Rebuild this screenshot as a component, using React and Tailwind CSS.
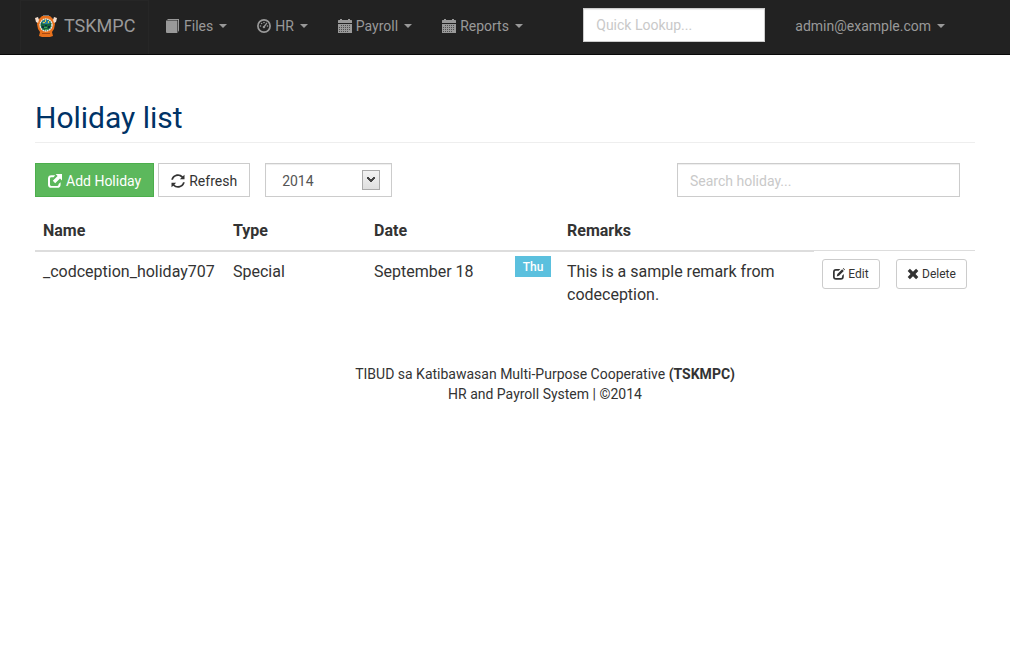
import React from "react";

const iconClass = "inline-block h-[14px] w-[14px] shrink-0";

function BookIcon() {
  return (
    <svg className={iconClass} viewBox="0 0 14 14" fill="currentColor" aria-hidden="true">
      <path d="M2 0H13v11.500L12 13V1H1z" />
      <path d="M0 1.600h11.400V14H1a1 1 0 0 1-1-1z" />
    </svg>
  );
}

function DashboardIcon() {
  return (
    <svg className={iconClass} viewBox="0 0 14 14" fill="currentColor" aria-hidden="true">
      <circle cx="7" cy="7" r="6.100" fill="none" stroke="currentColor" strokeWidth="1.700" />
      <circle cx="3.500" cy="7" r=".800" />
      <circle cx="4.600" cy="4.500" r=".800" />
      <circle cx="7" cy="3.500" r=".800" />
      <circle cx="10.500" cy="7" r=".800" />
      <path d="M9.600 3.600l.8.6-2.200 3.400a1.300 1.300 0 1 1-1.300-.9z" />
    </svg>
  );
}

function CalendarIcon() {
  return (
    <svg className={iconClass} viewBox="0 0 14 14" fill="currentColor" aria-hidden="true">
      <path d="M2 0h2v1h6V0h2v1h1.500l.5.600V4H0V1.600L.5 1H2z" />
      <path
        fillRule="evenodd"
        d="M0 5h14v9H0zM3.200 6.200v.8h.8v-.8zM5.200 6.200v.8h.8v-.8zM7.200 6.200v.8h.8v-.8zM9.200 6.200v.8h.8v-.8zM11.200 6.200v.8h.8v-.8zM1.200 8.200v.8h.8v-.8zM3.200 8.200v.8h.8v-.8zM5.200 8.200v.8h.8v-.8zM7.200 8.200v.8h.8v-.8zM9.200 8.200v.8h.8v-.8zM11.200 8.200v.8h.8v-.8zM1.200 10.200v.8h.8v-.8zM3.200 10.200v.8h.8v-.8zM5.200 10.200v.8h.8v-.8zM7.200 10.200v.8h.8v-.8zM9.200 10.200v.8h.8v-.8zM11.200 10.200v.8h.8v-.8zM1.200 12.200v.8h.8v-.8zM3.200 12.200v.8h.8v-.8zM5.200 12.200v.8h.8v-.8zM7.200 12.200v.8h.8v-.8zM9.200 12.200v.8h.8v-.8z"
      />
    </svg>
  );
}

function ShareIcon() {
  return (
    <svg className={iconClass} viewBox="0 0 14 14" fill="currentColor" aria-hidden="true">
      <path d="M7.200 1.200H3.400A3.400 3.400 0 0 0 0 4.600v5.800a3.400 3.400 0 0 0 3.400 3.400h5.800a3.400 3.400 0 0 0 3.400-3.400V8.200l-2 1.800v.6a1.300 1.300 0 0 1-1.300 1.300h-6A1.300 1.300 0 0 1 2 10.600v-6a1.300 1.300 0 0 1 1.300-1.300h2.300z" />
      <path d="M7.600 0H14v6.400l-2-2-4.800 4.800-2.400-2.400 4.800-4.800z" />
    </svg>
  );
}

function RefreshIcon() {
  return (
    <svg className={iconClass} viewBox="0 0 14 14" fill="currentColor" aria-hidden="true">
      <path d="M.3 5.800C.9 2.600 3.600.3 7 .3c1.900 0 3.600.8 4.800 2L13.500.7V5.300H8.900l1.700-1.700C9.700 2.600 8.400 2 7 2 4.500 2 2.500 3.600 2 5.800z" />
      <path d="M13.700 8.200c-.6 3.200-3.300 5.500-6.700 5.500-1.900 0-3.600-.8-4.800-2L.5 13.300V8.700h4.600l-1.700 1.700c.9 1 2.200 1.600 3.600 1.600 2.500 0 4.500-1.600 5-3.800z" />
    </svg>
  );
}

function EditIcon() {
  return (
    <svg className="inline-block h-[12px] w-[12px] shrink-0" viewBox="0 0 14 14" fill="currentColor" aria-hidden="true">
      <path d="M8.600 1.200H3.600A3.500 3.500 0 0 0 0 4.700v5.600a3.500 3.500 0 0 0 3.500 3.500h5.600a3.500 3.500 0 0 0 3.500-3.500V7l-2 2v1.500a1.300 1.300 0 0 1-1.300 1.300h-6A1.300 1.300 0 0 1 2 10.500v-5.900a1.300 1.300 0 0 1 1.300-1.300h3.300z" />
      <path d="M10.700 1.500l1.900 1.900-5.600 5.600-2.700.8.8-2.700zM11.500.7l.7-.7L14 1.900l-.7.7z" />
    </svg>
  );
}

function RemoveIcon() {
  return (
    <svg className="inline-block h-[12px] w-[12px] shrink-0" viewBox="0 0 14 14" fill="currentColor" aria-hidden="true">
      <path d="M3.400 1L7 4.400 10.600 1 13.200 3.600 9.900 7l3.300 3.400-2.600 2.600L7 9.600 3.400 13 .8 10.400 4.100 7 .8 3.600z" />
    </svg>
  );
}

function LogoMark() {
  return (
    <svg className="h-[22px] w-[22px] shrink-0" viewBox="0 0 22 22" aria-hidden="true">
      <path d="M5 3l2-2h8l2 2 2 2 1 4-1 5-2 3 1 4-3 1H7l-3-1 1-4-2-3-1-5 1-4z" fill="#e8711c" />
      <path d="M0 3l3-1 1 3-1 3-2-1zM22 3l-3-1-1 3 1 3 2-1z" fill="#f3dccb" />
      <circle cx="11" cy="10" r="6" fill="#17663c" stroke="#dfe9ea" strokeWidth="1.400" strokeDasharray="1.700 .500" />
      <path d="M6.500 7.500A5 5 0 0 1 15.500 7.500L14 9H8z" fill="#2680a0" />
      <path d="M10 5h1v2h-1zM8 7h2v1H8zM13 6h1v2h-1z" fill="#e3cc3b" />
      <path d="M7 11h2v2H7zM10 10h2v1h-2zM13 11h2v2h-2z" fill="#0b3040" />
      <path d="M9 12h3v1H9zM10 14h3v1h-3z" fill="#45a35e" />
      <path d="M7 18h8v1H7z" fill="#a94a12" />
      <path d="M8 0h6v1H8z" fill="#70757a" />
    </svg>
  );
}

function Caret() {
  return (
    <span className="ml-[2px] h-0 w-0 border-x-4 border-t-4 border-x-transparent border-t-current" aria-hidden="true" />
  );
}

const menus = [
  { label: "Files", Icon: BookIcon },
  { label: "HR", Icon: DashboardIcon },
  { label: "Payroll", Icon: CalendarIcon },
  { label: "Reports", Icon: CalendarIcon },
];

const fieldClass =
  "h-[34px] border border-[#ccc] bg-white px-3 text-sm text-[#555] shadow-[inset_0_1px_1px_rgba(0,0,0,0.075)] outline-none placeholder:text-[#c9c9c9] focus:border-[#66afe9]";

function NavBar() {
  return (
    <nav className="flex items-stretch border-b border-[#080808] bg-[#222] pr-[50px] pl-5 text-[#999]">
      <a href="#home" className="flex h-[54px] w-[129px] items-center gap-[7px] border border-b-0 border-[#262626] pb-[3px] pl-[14px] text-lg">
        <LogoMark />
        TSKMPC
      </a>
      <ul className="ml-[2px] flex">
        {menus.map(({ label, Icon }) => (
          <li key={label} className="flex">
            <a href={"#" + label.toLowerCase()} className="flex items-center gap-1 px-[15px] pb-[3px] text-sm hover:text-white">
              <Icon />
              {label}
              <Caret />
            </a>
          </li>
        ))}
      </ul>
      <form className="ml-auto flex items-center pb-1" onSubmit={(e) => e.preventDefault()}>
        <input type="text" aria-label="Quick Lookup" placeholder="Quick Lookup..." className={fieldClass + " w-[182px]"} />
      </form>
      <a href="#account" className="ml-[15px] flex items-center gap-1 px-[15px] pb-[3px] text-sm hover:text-white">
        admin@example.com
        <Caret />
      </a>
    </nav>
  );
}

function Toolbar() {
  return (
    <div className="mt-5 flex items-center pr-[15px]">
      <button type="button" className="flex h-[34px] items-center gap-1 border border-[#4cae4c] bg-[#5cb85c] px-3 pt-[2px] text-sm text-white">
        <ShareIcon />
        Add Holiday
      </button>
      <button type="button" className="ml-1 flex h-[34px] items-center gap-1 border border-[#ccc] bg-white px-3 pt-[2px] text-sm">
        <RefreshIcon />
        Refresh
      </button>
      <div className="relative ml-[15px]">
        <select aria-label="Year" defaultValue="2014" className="h-[34px] w-[127px] appearance-none border border-[#ccc] bg-white px-4 pt-[2px] text-sm text-[#555] shadow-[inset_0_1px_1px_rgba(0,0,0,0.075)] outline-none">
          <option>2014</option>
        </select>
        <span className="pointer-events-none absolute top-[7px] right-3 flex h-5 w-[18px] items-center justify-center border border-[#aaa] bg-linear-to-b from-[#f2f2f2] to-[#dfdfdf]">
          <svg className="h-[6px] w-[8px]" viewBox="0 0 8 6" fill="#444" aria-hidden="true">
            <path d="M0 0h2v1h1v1h2V1h1V0h2v2H7v1H6v1H5v1H3V4H2V3H1V2H0z" />
          </svg>
        </span>
      </div>
      <input type="text" aria-label="Search holiday" placeholder="Search holiday..." className={fieldClass + " ml-auto w-[283px] pt-[2px]"} />
    </div>
  );
}

function HolidayTable() {
  const head = "border-b-2 border-[#ddd] p-2 text-left font-bold";
  const action =
    "flex h-[30px] w-full items-center justify-center gap-[3px] rounded-[3px] border border-[#ccc] bg-white text-xs whitespace-nowrap";
  return (
    <table className="mt-[14px] w-full table-fixed border-separate border-spacing-0 text-base leading-[23px]">
      <colgroup>
        <col className="w-[190px]" />
        <col className="w-[15%]" />
        <col className="w-[15%]" />
        <col className="w-[52px]" />
        <col />
        <col className="w-[74px]" />
        <col className="w-[87px]" />
      </colgroup>
      <thead>
        <tr>
          <th className={head}>Name</th>
          <th className={head}>Type</th>
          <th className={head} colSpan={2}>Date</th>
          <th className={head}>Remarks</th>
          <td colSpan={2} className="p-0 align-bottom">
            <div className="mb-[1px] border-b border-[#ddd]" />
          </td>
        </tr>
      </thead>
      <tbody>
        <tr className="align-top">
          <td className="p-2">_codception_holiday707</td>
          <td className="p-2">Special</td>
          <td className="p-2">September 18</td>
          <td className="px-2 py-1">
            <span className="flex h-[21px] items-center justify-center bg-[#5bc0de] text-xs font-medium text-white">Thu</span>
          </td>
          <td className="p-2">This is a sample remark from codeception.</td>
          <td className="px-2 py-[7px]">
            <button type="button" className={action}>
              <EditIcon />
              Edit
            </button>
          </td>
          <td className="px-2 py-[7px]">
            <button type="button" className={action}>
              <RemoveIcon />
              Delete
            </button>
          </td>
        </tr>
      </tbody>
    </table>
  );
}

export default function App() {
  return (
    <div className="min-h-screen bg-white font-['Roboto',sans-serif] text-[#333]">
      <NavBar />
      <main className="px-[35px] pt-[46px]">
        <h1 className="border-b border-[#eee] pb-2 text-[30px] leading-[33px] text-[#036]">Holiday list</h1>
        <Toolbar />
        <HolidayTable />
      </main>
      <footer className="mt-[50px] pr-[35px] pl-[115px] text-center text-sm">
        <p>
          TIBUD sa Katibawasan Multi-Purpose Cooperative <strong>(TSKMPC)</strong>
        </p>
        <p>HR and Payroll System | ©2014</p>
      </footer>
    </div>
  );
}
